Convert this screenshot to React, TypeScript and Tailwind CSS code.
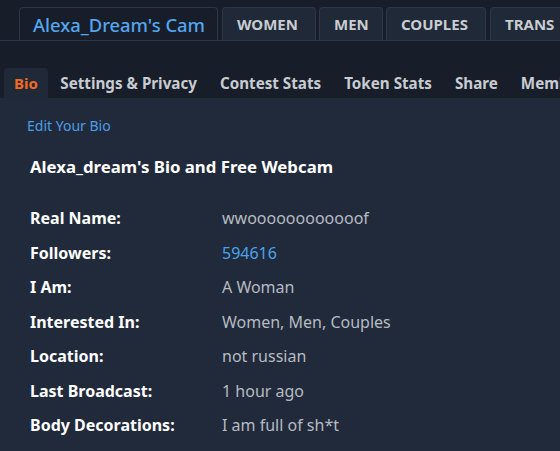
export default function App() {
  const topTabs: [string, string][] = [
    ["WOMEN", "w-[94px]"],
    ["MEN", "w-[64px]"],
    ["COUPLES", "w-[100px]"],
    ["TRANS", "w-[84px] ml-px"],
  ];
  const subTabs = ["Settings & Privacy", "Contest Stats", "Token Stats", "Share", "Members"];
  const rows: [string, string, boolean?][] = [
    ["Real Name:", "wwoooooooooooof"],
    ["Followers:", "594616", true],
    ["I Am:", "A Woman"],
    ["Interested In:", "Women, Men, Couples"],
    ["Location:", "not russian"],
    ["Last Broadcast:", "1 hour ago"],
    ["Body Decorations:", "I am full of sh*t"],
  ];
  return (
    <div className="w-[560px] h-[451px] overflow-hidden bg-[#171e2a] font-['Noto_Sans',sans-serif]">
      <div className="flex pt-[7px] pl-[19px] gap-[3px] border-b border-[#2d3748] h-[41px] whitespace-nowrap overflow-hidden">
        <div className="w-[199px] mr-px h-[34px] shrink-0 rounded-t-[4px] border border-b-0 border-[#2d3748] bg-[#171e2a] pl-[13px] text-[18.4px] font-medium text-[#54a6f0] leading-[34px] -mb-px">
          Alexa_Dream's Cam
        </div>
        {topTabs.map(([t, w]) => (
          <div
            key={t}
            className={`${w} h-[33px] shrink-0 rounded-t-[4px] border border-b-0 border-[#2d3748] bg-[#1f2937] pl-[14px] text-[15px] font-bold text-[#c9ccd1] leading-[33px]`}
          >
            {t}
          </div>
        ))}
      </div>
      <div className="flex items-end h-[57px] pl-[4px] whitespace-nowrap overflow-hidden">
        <div className="h-[30px] shrink-0 rounded-t-[4px] bg-[#1f2938] px-[10px] mr-[1px] text-[15px] font-bold text-[#f26a22] leading-[30px]">Bio</div>
        {subTabs.map((t) => (
          <div key={t} className="h-[30px] shrink-0 px-[11.5px] text-[15.2px] font-bold text-[#c8ccd1] leading-[30px]">
            {t}
          </div>
        ))}
      </div>
      <div className="bg-[#212a3a] h-full pl-[27px] pt-[18px]">
        <div className="text-[14px] text-[#4a9ee6] leading-[20px]">Edit Your Bio</div>
        <div className="pl-[3px] mt-[20px] text-[16.8px] font-bold text-white leading-[22px]">Alexa_dream's Bio and Free Webcam</div>
        <div className="pl-[3px] mt-[23px] flex flex-col">
          {rows.map(([k, v, link]) => (
            <div key={k} className="flex h-[34.5px] items-center text-[16px]">
              <div className="w-[192px] font-bold text-white">{k}</div>
              <div className={link ? "text-[#4aa3ec]" : "text-[#b6bbc2]"}>{v}</div>
            </div>
          ))}
        </div>
      </div>
    </div>
  );
}
